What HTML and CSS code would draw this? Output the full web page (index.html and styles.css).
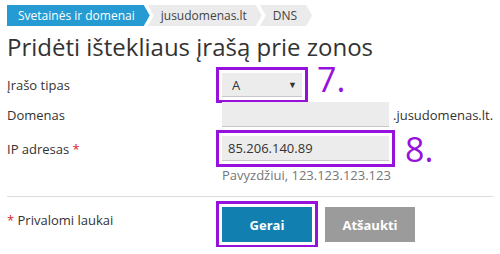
FILE: index.html
```html
<!DOCTYPE html>
<html lang="lt">
<head>
    <meta charset="UTF-8">
    <title>DNS įrašas</title>
    <link rel="stylesheet" href="styles.css">
</head>
<body>
    <ul class="crumbs">
        <li class="crumb first">Svetainės ir domenai</li>
        <li class="crumb">jusudomenas.lt</li>
        <li class="crumb">DNS</li>
    </ul>

    <h1>Pridėti ištekliaus įrašą prie zonos</h1>

    <form class="record-form">
        <div class="row row-type">
            <label>Įrašo tipas</label>
            <div class="field">
                <div class="select marked">
                    <span>A</span>
                    <span class="caret">▼</span>
                </div>
                <span class="step">7.</span>
            </div>
        </div>

        <div class="row row-domain">
            <label>Domenas</label>
            <div class="field">
                <div class="input"></div>
                <span class="suffix">.jusudomenas.lt.</span>
            </div>
        </div>

        <div class="row row-ip">
            <label>IP adresas <span class="req">*</span></label>
            <div class="field">
                <div class="input marked">85.206.140.89</div>
                <span class="step">8.</span>
            </div>
        </div>
        <div class="hint">Pavyzdžiui, 123.123.123.123</div>

        <hr>

        <div class="row row-actions">
            <div class="note"><span class="req">*</span> Privalomi laukai</div>
            <div class="field buttons">
                <button type="button" class="btn btn-ok marked">Gerai</button>
                <button type="button" class="btn btn-cancel">Atšaukti</button>
            </div>
        </div>
    </form>
</body>
</html>
```

FILE: styles.css
```css
body {
    font-family: 'Open Sans', sans-serif;
    font-size: 13px;
    color: #333;
    margin: 0;
    padding: 5px 7px;
    background: white;
}

.crumbs {
    list-style: none;
    margin: 0;
    padding: 0;
    display: flex;
    height: 21px;
}

.crumb {
    font-size: 12px;
    line-height: 21px;
    background: #ebebeb;
    color: #444;
    padding: 0 15px 0 13px;
    margin-left: -2px;
    clip-path: polygon(0 0, calc(100% - 6px) 0, 100% 50%, calc(100% - 6px) 100%, 0 100%, 6px 50%);
}

.crumb.first {
    background: #269bd3;
    color: white;
    margin-left: 0;
    padding-left: 11px;
    clip-path: polygon(0 0, calc(100% - 6px) 0, 100% 50%, calc(100% - 6px) 100%, 0 100%);
}

h1 {
    font-size: 24px;
    font-weight: normal;
    color: #333;
    margin: 5px 0 0 0;
    line-height: 32px;
}

.record-form {
    margin-top: 10px;
}

.row {
    display: flex;
    align-items: center;
}

.row label,
.note {
    width: 215px;
    flex-shrink: 0;
}

.field {
    display: flex;
    align-items: center;
}

.marked {
    outline: 3px solid #9612dc;
    outline-offset: 3px;
}

.select {
    width: 80px;
    height: 24px;
    box-sizing: border-box;
    background: #ececec;
    border-bottom: 1px solid #c8c8c8;
    display: flex;
    justify-content: space-between;
    align-items: center;
    padding: 0 5px 0 10px;
}

.caret {
    font-size: 9px;
}

.step {
    color: #9612dc;
    font-size: 34px;
    line-height: 24px;
    margin-left: 13px;
}

.row-type .step {
    margin-left: 15px;
    margin-top: -12px;
}

.row-ip .step {
    margin-left: 16px;
}

.input {
    width: 167px;
    height: 25px;
    box-sizing: border-box;
    background: #ececec;
    border-bottom: 1px solid #c8c8c8;
    padding: 0 6px;
    line-height: 24px;
}

.row-domain {
    margin-top: 5px;
}

.row-ip {
    margin-top: 9px;
}

.suffix {
    margin-left: 4px;
}

.req {
    color: #d2232a;
}

.hint {
    color: #777;
    margin: 5px 0 0 215px;
}

hr {
    border: none;
    border-top: 1px solid #dcdcdc;
    margin: 12px 0 0 0;
}

.row-actions {
    margin-top: 10px;
}

.note {
    margin-top: -10px;
}

.buttons {
    gap: 13px;
}

.btn {
    font-family: 'Open Sans', sans-serif;
    font-size: 13px;
    font-weight: bold;
    color: white;
    border: none;
    width: 90px;
    height: 35px;
    padding: 0;
}

.btn-ok {
    background: #1180b0;
}

.btn-cancel {
    background: #9b9b9b;
}
```
